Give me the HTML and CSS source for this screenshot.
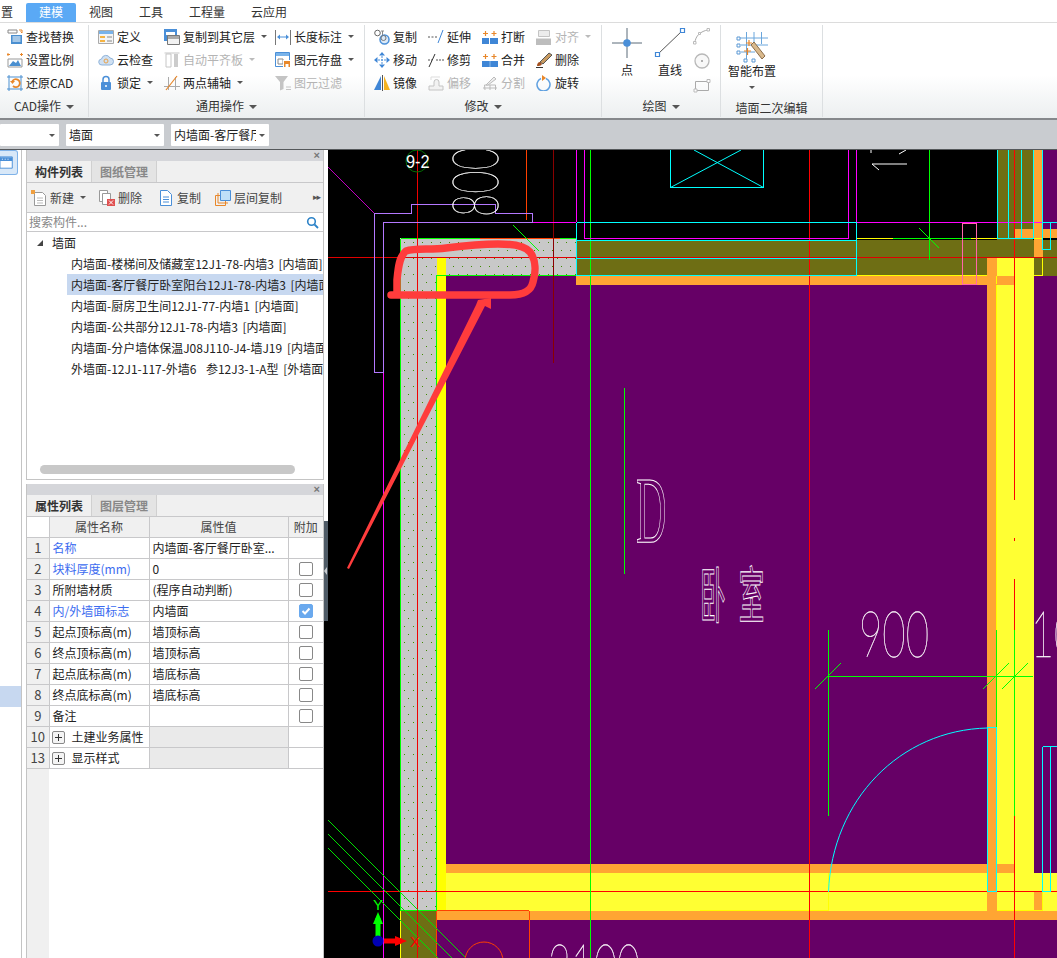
FILE: index.html
```html
<!DOCTYPE html>
<html lang="zh">
<head>
<meta charset="utf-8">
<title>墙面</title>
<link rel="stylesheet" href="styles.css">
</head>
<body>
<div class="app">
  <nav class="menubar">
    <span class="menu first">置</span><span class="menu active">建模</span><span class="menu">视图</span><span class="menu">工具</span><span class="menu">工程量</span><span class="menu">云应用</span>
  </nav>

  <section class="ribbon">
    <div class="group g-cad">
      <div class="cols">
        <div class="col">
          <div class="item"><svg class="ic" viewBox="0 0 16 16"><path d="M1 1h9v3H1z" fill="#fff" stroke="#888"/><path d="M12 1h3v3M15 4l-1.500-1.500" fill="none" stroke="#e8872a"/><path d="M4 6h11v9H4z" fill="#4a8fd0"/><path d="M5.500 8h8M5.500 10h8M5.500 12h8" stroke="#fff"/></svg><span>查找替换</span></div>
          <div class="item"><svg class="ic" viewBox="0 0 16 16"><path d="M1 7h14v8H1z" fill="#fff" stroke="#999"/><path d="M2 14l4-5 3 2 2-3 3 6z" fill="#4a8fd0"/><path d="M1 1v3M3 2.500H0M13 2.500h3M14.500 1v3" stroke="#e8872a"/></svg><span>设置比例</span></div>
          <div class="item"><svg class="ic" viewBox="0 0 16 16"><path d="M2 2h12v12H2z" fill="none" stroke="#4a8fd0"/><path d="M0 2h2V0M14 0v2h2M0 14h2v2M16 14h-2v2" stroke="#4a8fd0" fill="none"/><path d="M5 7a4 4 0 1 1 1 4" fill="none" stroke="#e8872a" stroke-width="1.800"/><path d="M3 6h5l-2.500 3z" fill="#e8872a"/></svg><span>还原CAD</span></div>
        </div>
      </div>
      <div class="glabel">CAD操作<i class="caret"></i></div>
    </div>

    <div class="group g-common">
      <div class="cols">
        <div class="col c66">
          <div class="item"><svg class="ic" viewBox="0 0 16 16"><path d="M.500 1.500h15v13H.500z" fill="#f4f4f4" stroke="#aaa"/><path d="M1 2h14v3H1z" fill="#79b3ea"/><path d="M2 7h5v2H2zM2 11h5v2H2z" fill="#f5b342"/><path d="M9 8h5M9 12h5" stroke="#888"/></svg><span>定义</span></div>
          <div class="item"><svg class="ic" viewBox="0 0 16 16"><path d="M4 13a3 3 0 0 1-.500-6 4.500 4.500 0 0 1 8.500-1 3.500 3.500 0 0 1 0 7z" fill="#cfe0f2" stroke="#8fb3d9"/><circle cx="8" cy="9" r="2" fill="none" stroke="#e8a24a"/></svg><span>云检查</span></div>
          <div class="item lock"><svg class="ic" viewBox="0 0 16 16"><path d="M5 7V4.500a3 3 0 0 1 6 0V7" fill="none" stroke="#4a8fd8" stroke-width="1.500"/><rect x="3" y="7" width="10" height="8" rx="1" fill="#4a8fd8"/><path d="M8 10v2" stroke="#fff" stroke-width="1.500"/></svg><span>锁定</span><i class="caret small"></i></div>
        </div>
        <div class="col c111">
          <div class="item"><svg class="ic" viewBox="0 0 16 16"><path d="M0 0h13v12H0z" fill="#4a8fd8"/><path d="M2 3h9v3H2z" fill="#fff"/><path d="M3.500 6.500h12v9h-12z" fill="#f2f2f2" stroke="#777"/><path d="M4 7h11v3H4z" fill="#aaa"/></svg><span>复制到其它层</span><i class="caret small"></i></div>
          <div class="item off"><svg class="ic" viewBox="0 0 16 16"><path d="M.500 1h15" stroke="#c6c6c6"/><path d="M2 2h5v13H2z" fill="#fff" stroke="#c6c6c6"/><path d="M10 2h4v13h-4z" fill="#ccc"/></svg><span>自动平齐板</span><i class="caret small"></i></div>
          <div class="item"><svg class="ic" viewBox="0 0 16 16"><path d="M0 11.500h16M4.500 15V2M11.500 15V2" stroke="#aaa" fill="none"/><path d="M2 15L13 1" stroke="#e8872a" stroke-width="1.200"/></svg><span>两点辅轴</span><i class="caret small"></i></div>
        </div>
        <div class="col">
          <div class="item"><svg class="ic" viewBox="0 0 16 16"><path d="M.500 1v15M15.500 1v15" stroke="#777"/><path d="M3 8h10" stroke="#4a8fd8"/><path d="M2 8l3-2.500v5zM14 8l-3-2.500v5z" fill="#4a8fd8"/></svg><span>长度标注</span><i class="caret small"></i></div>
          <div class="item"><svg class="ic" viewBox="0 0 16 16"><path d="M.500.500h14v14H.500z" fill="#fff" stroke="#4a8fd8"/><path d="M1 1h13v3H1z" fill="#79b3ea"/><path d="M3 7h5v5H3z" fill="none" stroke="#888"/><path d="M8 8h8v8H8z" fill="#fff"/><path d="M9 9h6v6H9z" fill="#e8872a"/><path d="M10.500 12h3v3h-3z" fill="#fff"/></svg><span>图元存盘</span><i class="caret small"></i></div>
          <div class="item off"><svg class="ic" viewBox="0 0 16 16"><path d="M0 1h13L8.500 7v7L5 15.500V7z" fill="#c4c4c4"/><path d="M11 12h5M11 14.500h5" stroke="#c4c4c4"/></svg><span>图元过滤</span></div>
        </div>
      </div>
      <div class="glabel">通用操作<i class="caret"></i></div>
    </div>

    <div class="group g-modify">
      <div class="cols">
        <div class="col c54">
          <div class="item"><svg class="ic" viewBox="0 0 16 16"><circle cx="3.500" cy="4" r="2.800" fill="#fff" stroke="#666"/><path d="M7 2h3M8.500 2v4" stroke="#888"/><circle cx="10.500" cy="10.500" r="4.500" fill="#dbe9f7" stroke="#4a8fd8" stroke-width="1.500"/><circle cx="9.500" cy="9" r="2.500" fill="none" stroke="#777"/></svg><span>复制</span></div>
          <div class="item"><svg class="ic" viewBox="0 0 16 16"><path d="M8 1v14M1 8h14" stroke="#4a8fd8" stroke-dasharray="2 1"/><path d="M8 0l3 3.500H5zM8 16l3-3.500H5zM0 8l3.500-3v6zM16 8l-3.500-3v6z" fill="#3f86d6"/></svg><span>移动</span></div>
          <div class="item"><svg class="ic" viewBox="0 0 16 16"><path d="M7 1L0 15h7z" fill="#3f86d6"/><path d="M8.500 0v16" stroke="#555"/><path d="M10 1l6 14h-6z" fill="#f5b320"/></svg><span>镜像</span></div>
        </div>
        <div class="col c54">
          <div class="item"><svg class="ic" viewBox="0 0 16 16"><path d="M0 8h10" stroke="#555" stroke-dasharray="2 1.500"/><path d="M10 14L15 1" stroke="#3f86d6"/></svg><span>延伸</span></div>
          <div class="item"><svg class="ic" viewBox="0 0 16 16"><path d="M0 8h4M8 8h8" stroke="#555" stroke-dasharray="2 1"/><path d="M1 15L7 2" stroke="#333"/></svg><span>修剪</span></div>
          <div class="item off"><svg class="ic" viewBox="0 0 16 16"><path d="M1 11h5V7a2.500 2.500 0 0 1 5 0v4h4v4H1z" fill="#f2f2f2" stroke="#c4c4c4"/><path d="M3 5V2h9" fill="none" stroke="#ddd"/></svg><span>偏移</span></div>
        </div>
        <div class="col c54">
          <div class="item"><svg class="ic" viewBox="0 0 16 16"><path d="M0 9h7v6H0zM8 9h8v6H8z" fill="#3f86d6"/><path d="M3.500 2v5M1 4.500h5M12 2v5M9.500 4.500h5" stroke="#e8872a" stroke-width="1.200"/></svg><span>打断</span></div>
          <div class="item"><svg class="ic" viewBox="0 0 16 16"><path d="M0 9h16v6H0z" fill="#3f86d6"/><path d="M8 9v6" stroke="#8cbcec"/><path d="M3.500 2v5M1 4.500h5M12 2v5M9.500 4.500h5" stroke="#e8872a" stroke-width="1.200"/></svg><span>合并</span></div>
          <div class="item off"><svg class="ic" viewBox="0 0 16 16"><path d="M1 13h14M3 15l-.500-5h11v5" fill="none" stroke="#bbb"/><path d="M4 10L12 2l2 2-8 6z" fill="#eee" stroke="#bbb"/><path d="M8 10v5" stroke="#bbb"/></svg><span>分割</span></div>
        </div>
        <div class="col">
          <div class="item off"><svg class="ic" viewBox="0 0 16 16"><path d="M2.500 1.500h11v6h-11z" fill="#ececec" stroke="#c4c4c4"/><path d="M0 9.500h15V16H0z" fill="#bdbdbd"/></svg><span>对齐</span><i class="caret small"></i></div>
          <div class="item"><svg class="ic" viewBox="0 0 16 16"><path d="M13 1l3 2-9 9-3-2z" fill="#c89a60" stroke="#555"/><path d="M4 10c-2 0-3 2-3 4 2 0 4 0 5-2z" fill="#a5501e"/><path d="M0 15.500h7" stroke="#333"/></svg><span>删除</span></div>
          <div class="item"><svg class="ic" viewBox="0 0 16 16"><path d="M5 3.500a6.500 6.500 0 1 0 5 0" fill="none" stroke="#5fa0e0" stroke-width="1.500"/><path d="M6 0v6l4-3z" fill="#e8872a"/></svg><span>旋转</span></div>
        </div>
      </div>
      <div class="glabel">修改<i class="caret"></i></div>
    </div>

    <div class="group g-draw">
      <div class="cols">
        <div class="big big-pt"><svg width="30" height="30" viewBox="0 0 30 30"><path d="M15 0v30M0 15h30" stroke="#5a6a78"/><circle cx="15" cy="15" r="3.800" fill="#4a8fd8"/></svg><span>点</span></div>
        <div class="big big-ln"><svg width="32" height="30" viewBox="0 0 32 30"><path d="M4 26L28 3" stroke="#555"/><path d="M1.500 24.500h4v4h-4zM26.500 .500h4v4h-4z" fill="#fff" stroke="#3f86d6" stroke-width="1.200"/></svg><span>直线</span></div>
        <div class="stack">
          <svg width="18" height="18" viewBox="0 0 18 18"><path d="M2 15C2 8 8 3 15 2" fill="none" stroke="#aaa"/><path d="M.500 13.500h2.500v2.500H.500zM14 .500h2.500V3H14zM5.500 4.500h2v2h-2z" fill="#fff" stroke="#bbb"/></svg>
          <svg width="18" height="18" viewBox="0 0 18 18"><circle cx="9" cy="9" r="7" fill="#f8f8f8" stroke="#b8b8b8" stroke-width="1.300"/><circle cx="9" cy="9" r="1" fill="#999"/></svg>
          <svg width="18" height="18" viewBox="0 0 18 18"><path d="M2.500 5.500h13v9h-13z" fill="none" stroke="#aaa"/><path d="M14 3.500h3v3h-3zM1 13h3v3H1z" fill="#fff" stroke="#bbb"/></svg>
        </div>
      </div>
      <div class="glabel">绘图<i class="caret"></i></div>
    </div>

    <div class="group g-wall">
      <div class="cols">
        <div class="big big-smart">
          <svg width="32" height="32" viewBox="0 0 32 32"><path d="M5 7h28M5 14h28M5 21h14M10.500 1v30M18 1v12M25.500 1v12M3 7h2" stroke="#6aa6dc" fill="none"/><path d="M1 6h3v3H1zM1 13h3v3H1zM1 20h3v3H1zM8 28h3v3H8zM16 28h3v3h-3z" fill="#fff" stroke="#5a98d4"/><path d="M10 12h6M13 9v6M8 20h7M11.500 17v7" stroke="#e8872a" stroke-width="1.200"/><path d="M15 14l3-3 11 14-3 3z" fill="#d9b98c" stroke="#8b6c4a"/></svg>
          <span class="smart-t">智能布置</span><i class="caret small"></i>
        </div>
      </div>
      <div class="glabel">墙面二次编辑</div>
    </div>
  </section>

  <div class="filterbar">
    <div class="drop d1"><i class="caret small"></i></div>
    <div class="drop d2"><span>墙面</span><i class="caret small"></i></div>
    <div class="drop d3"><span>内墙面-客厅餐厅</span><i class="caret small"></i></div>
  </div>

  <main class="work">
    <aside class="rail">
      <div class="railbtn"><svg width="18" height="14" viewBox="0 0 18 14"><path d="M0 .500h13v12H0z" fill="#fff" stroke="#4a8fd8"/><path d="M0 1h13v4H0z" fill="#4a8fd8"/><path d="M2 3h1M5 3h1M8 3h1" stroke="#fff"/></svg></div>
      <div class="railsel"></div>
    </aside>

    <div class="side">
      <div class="panels">
        <section class="panel p-list">
          <div class="ptitle"><span class="x">×</span></div>
          <div class="tabs"><span class="tab on">构件列表</span><span class="tab">图纸管理</span></div>
          <div class="ptools">
            <span class="tool t-new"><svg class="ic" viewBox="0 0 16 16"><path d="M3.500 2.500h8l3 3v10h-11z" fill="#fff" stroke="#999"/><path d="M6 8h6M6 10.500h6M6 13h6" stroke="#bbb"/><path d="M0 0h4v4H0z" fill="#f0a040"/></svg>新建<i class="caret small"></i></span>
            <span class="tool t-del"><svg class="ic" viewBox="0 0 16 16"><path d="M.500 .500h8v11h-8z" fill="#fff" stroke="#999"/><path d="M3.500 3.500h8v11h-8z" fill="#fff" stroke="#999"/><path d="M8 9h8v7H8z" fill="#e05050"/><path d="M10 10.500l4 4M14 10.500l-4 4" stroke="#fff"/></svg>删除</span>
            <span class="tool t-copy"><svg class="ic" viewBox="0 0 16 16"><path d="M2.500 .500h7l4 4v11h-11z" fill="#fff" stroke="#4a8fd8"/><path d="M5 7h6M5 9.500h6M5 12h6" stroke="#4a8fd8"/></svg>复制</span>
            <span class="tool t-floor"><svg class="ic" viewBox="0 0 16 16"><path d="M.500 5.500h10v10H.500z" fill="none" stroke="#e8872a"/><path d="M3 3v10h10" fill="none" stroke="#e8872a"/><path d="M5.500 .500h10v10h-10z" fill="#bfe0f8" stroke="#4a8fd8"/></svg>层间复制</span>
            <span class="more">▸▸</span>
          </div>
          <div class="search"><span>搜索构件...</span><svg width="13" height="13" viewBox="0 0 13 13"><circle cx="5.500" cy="5.500" r="3.800" fill="none" stroke="#2d83c8" stroke-width="1.600"/><path d="M8.500 8.500l3.500 3.500" stroke="#2d83c8" stroke-width="1.800"/></svg></div>
          <div class="tree">
            <div class="node root"><i class="twist"></i>墙面</div>
            <div class="node leaf">内墙面-楼梯间及储藏室12J1-78-内墙3 [内墙面]</div>
            <div class="node leaf sel">内墙面-客厅餐厅卧室阳台12J1-78-内墙3 [内墙面]</div>
            <div class="node leaf">内墙面-厨房卫生间12J1-77-内墙1 [内墙面]</div>
            <div class="node leaf">内墙面-公共部分12J1-78-内墙3 [内墙面]</div>
            <div class="node leaf">内墙面-分户墙体保温J08J110-J4-墙J19 [内墙面]</div>
            <div class="node leaf">外墙面-12J1-117-外墙6&nbsp; 参12J3-1-A型 [外墙面]</div>
          </div>
          <div class="hscroll"><i></i></div>
        </section>

        <section class="panel p-props">
          <div class="ptitle"><span class="x">×</span></div>
          <div class="tabs"><span class="tab on">属性列表</span><span class="tab">图层管理</span></div>
          <table class="props">
            <thead><tr><th class="n"></th><th>属性名称</th><th>属性值</th><th>附加</th></tr></thead>
            <tbody>
              <tr><td class="n">1</td><td class="blue">名称</td><td>内墙面-客厅餐厅卧室...</td><td></td></tr>
              <tr><td class="n">2</td><td class="blue">块料厚度(mm)</td><td>0</td><td class="chk"><i class="box"></i></td></tr>
              <tr><td class="n">3</td><td>所附墙材质</td><td>(程序自动判断)</td><td class="chk"><i class="box"></i></td></tr>
              <tr><td class="n">4</td><td class="blue">内/外墙面标志</td><td>内墙面</td><td class="chk"><i class="box on"><svg width="12" height="12" viewBox="0 0 12 12"><path d="M2.500 6l2.500 2.500 4.500-5" fill="none" stroke="#fff" stroke-width="2"/></svg></i></td></tr>
              <tr><td class="n">5</td><td>起点顶标高(m)</td><td>墙顶标高</td><td class="chk"><i class="box"></i></td></tr>
              <tr><td class="n">6</td><td>终点顶标高(m)</td><td>墙顶标高</td><td class="chk"><i class="box"></i></td></tr>
              <tr><td class="n">7</td><td>起点底标高(m)</td><td>墙底标高</td><td class="chk"><i class="box"></i></td></tr>
              <tr><td class="n">8</td><td>终点底标高(m)</td><td>墙底标高</td><td class="chk"><i class="box"></i></td></tr>
              <tr><td class="n">9</td><td>备注</td><td></td><td class="chk"><i class="box"></i></td></tr>
              <tr><td class="n">10</td><td class="grp"><i class="plus"></i>土建业务属性</td><td class="shade"></td><td></td></tr>
              <tr><td class="n">13</td><td class="grp"><i class="plus"></i>显示样式</td><td class="shade"></td><td></td></tr>
            </tbody>
          </table>
          <div class="idxfill"></div>
        </section>
      </div>
      <div class="gutter"><div class="thumb"></div></div>
    </div>

    <div class="canvas">
      <svg class="cad" width="729" height="808" viewBox="328 150 729 808" shape-rendering="crispEdges">
        <defs>
          <pattern id="dots" x="400" y="240" width="18" height="16" patternUnits="userSpaceOnUse">
            <rect x="4" y="2" width="1" height="1" fill="#3f8a00"/><rect x="13" y="2" width="1" height="1" fill="#3f8a00"/>
            <rect x="8" y="10" width="1" height="1" fill="#3f8a00"/><rect x="17" y="10" width="1" height="1" fill="#3f8a00"/>
          </pattern>
        </defs>
        <rect x="328" y="150" width="729" height="808" fill="#000"/>

        <g fill="#660066">
          <rect x="446" y="276" width="541" height="588"/>
          <rect x="437" y="911" width="620" height="47"/>
          <rect x="1034" y="276" width="23" height="597"/>
          <rect x="1043" y="150" width="14" height="79"/>
        </g>

        <g fill="#6e6e14">
          <rect x="576" y="240" width="481" height="36"/>
          <rect x="997" y="150" width="36" height="90"/>
          <rect x="400" y="911" width="36" height="47"/>
        </g>

        <g fill="#ffa533">
          <rect x="576" y="276" width="421" height="9"/>
          <rect x="987" y="258" width="10" height="662"/>
          <rect x="1034" y="150" width="9" height="108"/>
          <rect x="1015" y="229" width="42" height="9"/>
          <rect x="446" y="864" width="568" height="9"/>
          <rect x="437" y="911" width="620" height="9"/>
        </g>

        <g fill="#ffff33">
          <rect x="997" y="258" width="37" height="653"/>
          <rect x="446" y="873" width="541" height="38"/>
          <rect x="997" y="873" width="60" height="19"/>
          <rect x="1042" y="892" width="15" height="19"/>
        </g>
        <rect x="997" y="276" width="17" height="9" fill="#ffa533"/>
        <rect x="997" y="864" width="17" height="9" fill="#ffa533"/>
        <rect x="1034" y="892" width="8" height="19" fill="#ffa533"/>

        <rect x="437" y="258" width="9" height="653" fill="#ffff00"/>

        <g fill="#c8c8c8">
          <rect x="400" y="238" width="176" height="37"/>
          <rect x="400" y="238" width="36" height="673"/>
        </g>
        <g fill="url(#dots)">
          <rect x="400" y="238" width="176" height="37"/>
          <rect x="400" y="238" width="36" height="673"/>
        </g>
        <rect x="437" y="258" width="9" height="17" fill="#ffff00"/>

        <g fill="none" stroke-width="1">
          <path d="M400.500 238.500V910.500H436.500V275.500H576" stroke="#00ff00"/>
          <path d="M400.500 238.500H480M560 238.500H576" stroke="#00ff00"/>
          <path d="M480 238.500H560" stroke="#ff4000"/>
          <path d="M857 238.500H893M971 238.500H1042M857 275.500H987M1034 275.500H1042.500V258" stroke="#ffff00"/>
          <path d="M893 238.500H971" stroke="#00ff00"/>
          <path d="M996.500 276V284M996.500 285V630M400.500 911V958M437 910.500H529" stroke="#ffff00"/>
          <path d="M828 910.500V873M828 910.500H700M997 910.500H1042.500V892" stroke="#ffff00"/>

          <path d="M809.500 150V958" stroke="#ff0000"/>
          <path d="M417.500 150V958" stroke="#f00000"/>
          <path d="M553.500 150V363" stroke="#8a0000"/>
          <path d="M526.500 150V220" stroke="#ff4000"/>
          <path d="M328 257.500H1057" stroke="#e00000"/>
          <path d="M328 891.500H1057" stroke="#ff0000"/>
          <path d="M1014.500 150V500M1014.500 538V541M1014.500 579V630M1014.500 816V958" stroke="#ff0000"/>
          <path d="M590.500 150V958" stroke="#00ff00"/>
          <path d="M624.500 388V574" stroke="#00ff00"/>
          <path d="M929.500 150V260" stroke="#00ff00"/>
          <path d="M828.500 630V816M828 676.500H1033M996.500 630V816M1014.500 630V816" stroke="#00ff00"/>

          <g stroke="#ff00ff">
            <path d="M576.500 150V222M584.500 150V238.500H848.500V150M856.500 150V222"/>
            <path d="M532 222.500H576M857 222.500H1043"/>
            <path d="M383.500 372V958"/>
          </g>
          <path d="M374.500 372.500V213.500H411.500V204.500H495.500V213.500H532.500V222.500H383.500V372.500H374.500" stroke="#b478ff"/>

          <g stroke="#00ffff">
            <path d="M576.500 222.500H856.500M576.500 222.500V275.500M856.500 222.500V275.500"/>
            <path d="M576 240.500H857M576 258.500H857M576 275.500H857"/>
            <path d="M997.500 150V238.500H1033.500V150M1008.500 150V238M1021.500 150V238"/>
            <path d="M1042.500 150V249.500H1050.500V222M1042 222.500H1057"/>
            <path d="M670.500 150V187.500H763.500V150"/>
            <path d="M987.500 727.500H996.500V891.500H987.500zM1042.500 746.500H1057M1042.500 746.500V891.500H1050.500V746.500"/>
          </g>
          <rect x="962.500" y="223.500" width="14" height="61" stroke="#ff66aa"/>
          <path d="M529.500 910.500V958M436.500 910.500V958M437 910.500H529" stroke="#ff4000"/>
        </g>

        <g fill="none" shape-rendering="auto">
          <path d="M670.500 187.500L741 150M763.500 187.500L694 150" stroke="#00ffff"/>
          <path d="M828.500 892C832 800 900 730 987.500 728" stroke="#00ffff"/>
          <path d="M513 225L539 251M919 228L939 248M815 689L841 663M983 689L1009 663M1002 689L1028 663" stroke="#00ff00"/>
          <path d="M328 820L465 957M328 834L452 958M328 848L438 958" stroke="#00e000"/>
          <path d="M328 167L374 213" stroke="#c000c0"/>
          <circle cx="484" cy="961" r="19" stroke="#ff4000"/>
          <circle cx="417" cy="161" r="11" stroke="#007000"/>
          <path d="M872 164H907M872 164L879 170M899 154L906 150M871 150V153" stroke="#fff"/>
        </g>

        <g class="cadtext">
          <text class="num small-num" x="0" y="0" transform="translate(406 168) scale(.86 1)">9-2</text>
          <text class="num" transform="translate(498 217) rotate(-90)" textLength="70" lengthAdjust="spacingAndGlyphs">800</text>
          <text class="num" x="0" y="0" transform="translate(859 657)" textLength="70" lengthAdjust="spacingAndGlyphs">900</text>
          <text class="num" transform="translate(1031 657)" textLength="46" lengthAdjust="spacingAndGlyphs">10</text>
          <text class="num" transform="translate(548 990)" textLength="92" lengthAdjust="spacingAndGlyphs">2100</text>
          <text class="letter" transform="translate(636 543) scale(.44 1)">D</text>
          <text class="room" transform="translate(700 618) scale(.88 2.100)">卧室</text>
        </g>

        <g shape-rendering="auto">
          <path d="M378 941V918" stroke="#00ff00" stroke-width="5"/>
          <path d="M378 912l5 12h-10z" fill="#00ff00"/>
          <path d="M384 941H402" stroke="#ff0000" stroke-width="5"/>
          <path d="M407 941l-12 5v-10z" fill="#ff0000"/>
          <circle cx="378" cy="941" r="5.500" fill="#0000b4"/>
          <text class="axis y" x="373" y="910">Y</text>
          <text class="axis x" x="410" y="947">X</text>
        </g>

        <g shape-rendering="auto">
          <path d="M391 295H510C524 295 531 291 533 282C536 272 536 260 530 252C525 246 512 244 498 244C480 244 462 246 446 248C430 250 415 248 406 251C399 256 398 270 397 280V292" fill="none" stroke="#ff3c3c" stroke-width="7.500" stroke-linecap="round" stroke-linejoin="round"/>
          <path d="M347 568L476 305L478 300L491 298V309L485 306L349 569z" fill="#ff3c3c"/>
        </g>
      </svg>
    </div>
  </main>
</div>
</body>
</html>
```

FILE: styles.css
```css
html, body { margin: 0; padding: 0; background: #fff; overflow: hidden; }
.app {
  width: 1057px; height: 958px; display: flex; flex-direction: column; overflow: hidden;
  font: 12px/16px "Noto Sans CJK SC", "Liberation Sans", sans-serif; color: #222;
}

/* menu tabs */
.menubar { height: 22px; padding-top: 3px; box-sizing: border-box; display: flex; background: #fff; flex: none; }
.menu { padding: 0 13px; line-height: 18px; height: 19px; color: #333; }
.menu.first { padding: 0 13px 0 1px; }
.menu.active { background: #5aa9f5; color: #fff; border-radius: 2px 2px 0 0; }

/* ribbon */
.ribbon {
  height: 98px; flex: none; box-sizing: border-box; display: flex;
  background: linear-gradient(#fff 55%, #eceff0);
  border-top: 1px solid #dcdcdc; border-bottom: 2px solid #85888b;
}
.group { display: flex; flex-direction: column; border-right: 1px solid #dcdfe1; margin: 2px 0 1px; box-sizing: border-box; }
.g-cad { width: 89px; padding-left: 7px; }
.g-common { width: 276px; padding-left: 9px; }
.g-modify { width: 237px; padding-left: 9px; }
.g-draw { width: 119px; }
.g-wall { width: 102px; }
.cols { display: flex; height: 71px; flex: none; }
.col { display: flex; flex-direction: column; }
.c66 { width: 66px; }
.c111 { width: 111px; }
.c54 { width: 54px; }
.item { height: 23px; display: flex; align-items: center; white-space: nowrap; }
.ic { width: 16px; height: 16px; flex: none; margin-right: 3px; }
.off { color: #b4b4b4; }
.glabel { text-align: center; height: 20px; line-height: 20px; color: #333; }
.g-cad .glabel { margin-left: -7px; }
.g-common .glabel { margin-left: -9px; }
.g-modify .glabel { margin-left: -9px; }
.g-wall .glabel { margin-top: 2px; }
.caret { display: inline-block; width: 0; height: 0; border: 4px solid transparent; border-top: 4px solid #555; border-bottom: 0; margin-left: 5px; vertical-align: 2px; }
.caret.small { border-width: 3px 3px 0; margin-left: 6px; }
.off .caret { border-top-color: #bbb; }

.big { display: flex; flex-direction: column; align-items: center; }
.big span { margin-top: 4px; }
.big-pt { width: 42px; margin: 3px 0 0 4px; }
.big-ln { width: 44px; margin: 3px 0 0 0; }
.stack { display: flex; flex-direction: column; gap: 6px; margin: 3px 0 0 1px; }
.big-smart { width: 62px; padding-top: 6px; }
.big-smart span { margin-top: 0; }
.big-smart .caret { margin: 7px 0 0; }

/* filter bar */
.filterbar { height: 30px; flex: none; background: #c9ccd0; display: flex; gap: 7px; padding: 4px 0 3px; box-sizing: border-box; border-bottom: 1px solid #55585b; }
.drop { background: #fff; height: 22px; display: flex; align-items: center; justify-content: space-between; box-sizing: border-box; padding: 0 3px; border-radius: 1px; overflow: hidden; }
.d1 { width: 59px; justify-content: flex-end; padding-right: 4px; }
.d2 { width: 98px; padding-right: 4px; }
.d3 { width: 98px; padding-right: 4px; }
.d3 span { width: 82px; overflow: hidden; white-space: nowrap; }
.drop .caret { margin-left: 0; }

/* main */
.work { flex: 1; display: flex; min-height: 0; background: #fff; }
.rail { width: 22px; border-right: 1px solid #c4c4c4; box-sizing: border-box; flex: none; position: relative; }
.railbtn { width: 17px; height: 23px; background: #d8e8f8; border: 1px solid #7fb2e8; border-left: 0; border-radius: 0 3px 3px 0; display: flex; align-items: center; overflow: hidden; }
.railsel { position: absolute; left: 0; top: 536px; width: 21px; height: 21px; background: #c7d8f0; }
.side { display: flex; width: 306px; flex: none; }
.panels { width: 298px; margin-left: 4px; display: flex; flex-direction: column; gap: 4px; flex: none; }
.gutter { width: 4px; flex: none; padding-top: 371px; background: linear-gradient(#fff 371px, #000 371px); }
.thumb { height: 100px; background: #4f5b66; position: relative; }
.thumb::after { content: ""; position: absolute; left: 0; top: 46px; border: 4px solid transparent; border-left: 0; border-right: 3px solid #c8ccd0; }

.panel { border: solid #c4c4c4; border-width: 0 1px 1px; box-sizing: border-box; display: flex; flex-direction: column; background: #fff; min-height: 0; }
.p-list { height: 330px; }
.p-props { flex: 1; border-bottom: 0; }
.ptitle { height: 11px; background: #d5d6da; position: relative; flex: none; }
.x { position: absolute; right: 3px; top: -3px; font: bold 11px/16px "Liberation Sans", sans-serif; color: #777; }
.tabs { height: 22px; flex: none; background: #f0f0f0; display: flex; border-bottom: 1px solid #c8c8ca; box-sizing: border-box; }
.tab { width: 64px; text-align: center; line-height: 21px; background: #e4e4e4; color: #888; border-right: 1px solid #d0d0d0; font-weight: 700; }
.tab.on { background: #f0f0f0; color: #333; }

.ptools { height: 30px; flex: none; background: #f0f0f0; border-bottom: 1px solid #c8c8ca; box-sizing: border-box; display: flex; align-items: center; position: relative; color: #444; }
.tool { display: flex; align-items: center; white-space: nowrap; }
.t-new { margin-left: 4px; width: 68px; }
.t-del { width: 59px; }
.t-copy { width: 57px; }
.t-floor { width: 90px; }
.more { position: absolute; right: 3px; top: 8px; font: 9px/12px "DejaVu Sans", sans-serif; color: #555; letter-spacing: -1px; }

.search { height: 19px; flex: none; border-bottom: 1px solid #c8c8ca; box-sizing: border-box; display: flex; align-items: center; justify-content: space-between; padding: 0 4px 0 2px; color: #888; }
.tree { flex: 1; overflow: hidden; }
.node { height: 21px; line-height: 21px; white-space: nowrap; overflow: hidden; color: #222; }
.root { padding-left: 25px; position: relative; }
.twist { position: absolute; left: 10px; top: 8px; width: 0; height: 0; border-left: 6px solid transparent; border-bottom: 6px solid #444; }
.leaf { margin-left: 40px; padding-left: 4px; word-spacing: 2px; }
.sel { background: #c7d8f0; }
.hscroll { height: 14px; flex: none; }
.hscroll i { display: block; width: 255px; height: 9px; margin-left: 13px; border-radius: 5px; background: #c8c8c8; }

/* property table */
.props { border-collapse: collapse; table-layout: fixed; width: 296px; flex: none; color: #222; }
.props th:nth-child(1) { width: 22px; }
.props th:nth-child(2) { width: 100px; }
.props th:nth-child(3) { width: 139px; }
.props th, .props td { border: 1px solid #c8c8ca; padding: 0; box-sizing: border-box; height: 21px; line-height: 20px; }
.props tr > :first-child { border-left: 0; }
.props tr > :last-child { border-right: 0; }
.props thead th { font-weight: 400; height: 20px; background: #f0f0f0; border-top: 0; color: #444; }
.props th.n { background: #fff; border: 0; border-bottom: 1px solid #c8c8ca; }
.props td { padding-left: 3px; white-space: nowrap; overflow: hidden; }
.props td.n { background: #f0f0f0; text-align: center; padding: 0; font-size: 13px; color: #444; }
.blue { color: #3c6cf0; }
.shade { background: #eaeaea; }
.chk { text-align: center; }
.props td.chk { padding: 0; }
.box { display: inline-block; width: 12px; height: 12px; border: 1px solid #888; border-radius: 2px; vertical-align: -2px; background: #fff; }
.box.on { background: #6aa9ee; border-color: #6aa9ee; }
.box svg { display: block; }
.props td.grp { padding-left: 2px; }
.plus { display: inline-block; width: 11px; height: 11px; border: 1px solid #888; border-radius: 2px; margin-right: 7px; vertical-align: -2px; background: linear-gradient(#333, #333) center/7px 1px no-repeat, linear-gradient(#333, #333) center/1px 7px no-repeat, #f4f4f4; }
.idxfill { flex: 1; width: 22px; background: #f0f0f0; }

/* CAD canvas */
.canvas { flex: 1; min-width: 0; overflow: hidden; background: #000; }
.cad { display: block; }
.num { font: 100 64px "Lato", "Roboto", sans-serif; fill: #fff; stroke: #fff; stroke-width: .35; }
.small-num { font: 400 19px "Liberation Sans", sans-serif; stroke: none; }
.letter { font: 400 96px "Liberation Serif", serif; fill: none; stroke: #fff; stroke-width: 1; }
.room { font: 400 29px "Noto Sans CJK SC", sans-serif; fill: #660066; stroke: #fff; stroke-width: .5; letter-spacing: 15px; }
.axis { font: 400 15px "Liberation Sans", sans-serif; }
.axis.y { fill: #00ff00; }
.axis.x { fill: #ff0000; }
```
